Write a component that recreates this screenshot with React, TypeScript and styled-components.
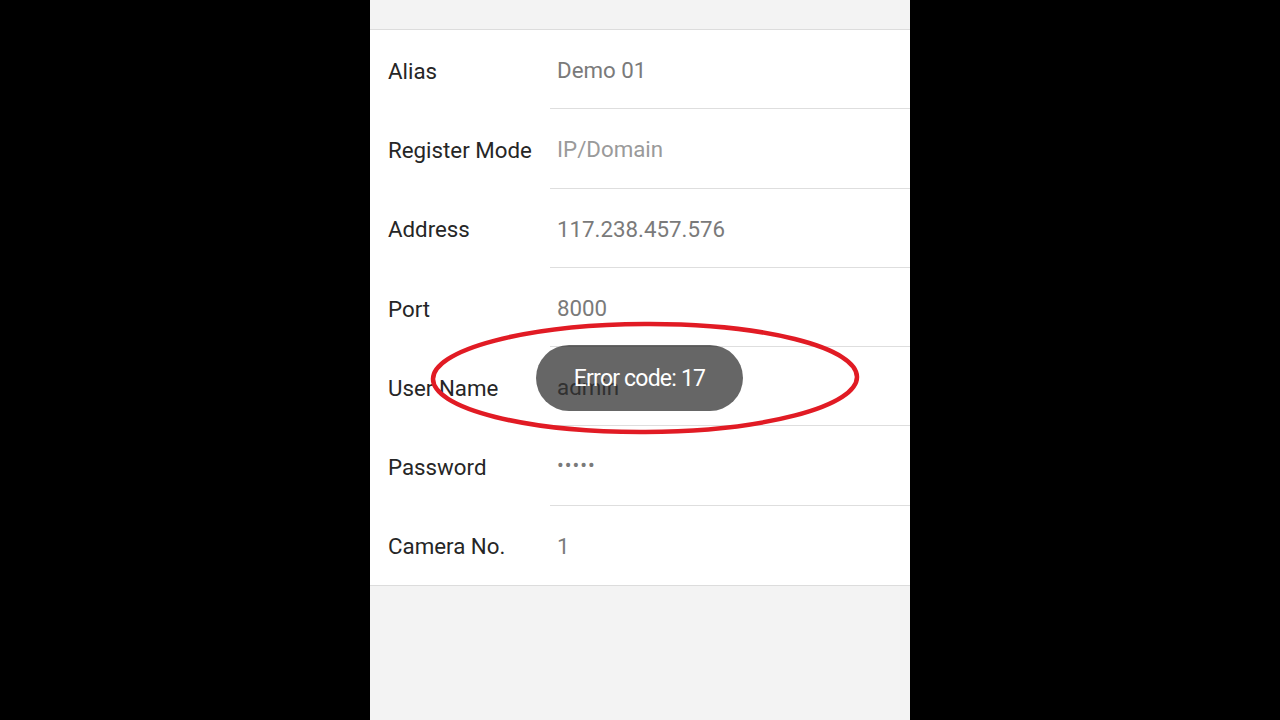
import styled, { createGlobalStyle } from 'styled-components';

const GlobalStyle = createGlobalStyle`
  html, body {
    margin: 0;
    padding: 0;
    background: #000;
    font-family: Roboto, "Liberation Sans", sans-serif;
  }
`;

const Stage = styled.div`
  width: 1280px;
  height: 720px;
  display: flex;
  justify-content: center;
  background: #000;
  overflow: hidden;
`;

const Phone = styled.div`
  width: 540px;
  height: 720px;
  background: #f3f3f3;
  position: relative;
  display: flex;
  flex-direction: column;
`;

const TopBand = styled.div`
  height: 29px;
  border-bottom: 1px solid #dcdcdc;
`;

const Form = styled.div`
  background: #fff;
  display: flex;
  flex-direction: column;
  border-bottom: 1px solid #dcdcdc;
`;

const Row = styled.div`
  height: 79.3px;
  display: flex;
  align-items: stretch;
  box-sizing: border-box;
`;

const Label = styled.div`
  width: 162px;
  padding-left: 18px;
  padding-top: 2px;
  display: flex;
  align-items: center;
  font-size: 22.3px;
  color: #262626;
`;

const Field = styled.div<{ last?: boolean }>`
  flex: 1;
  display: flex;
  align-items: center;
  padding-left: 7px;
  padding-top: 2px;
  border-bottom: ${({ last }) => (last ? 'none' : '1px solid #dedede')};
`;

const Value = styled.span<{ muted?: boolean }>`
  font-size: 22.3px;
  color: ${({ muted }) => (muted ? '#9a9a9a' : '#7a7a7a')};
`;

const Dots = styled.span`
  font-size: 20px;
  letter-spacing: 1px;
  color: #7a7a7a;
  margin-top: -4px;
`;

const Toast = styled.div`
  position: absolute;
  left: 166px;
  top: 345px;
  width: 207px;
  height: 66px;
  border-radius: 33px;
  background: rgba(0, 0, 0, 0.6);
  color: #fff;
  display: flex;
  align-items: center;
  justify-content: center;
  font-size: 23px;
  letter-spacing: -0.8px;
`;

const Circle = styled.svg`
  position: absolute;
  left: 50px;
  top: 310px;
  pointer-events: none;
`;

const rows = [
  { label: 'Alias', value: 'Demo 01' },
  { label: 'Register Mode', value: 'IP/Domain', muted: true },
  { label: 'Address', value: '117.238.457.576' },
  { label: 'Port', value: '8000' },
  { label: 'User Name', value: 'admin' },
  { label: 'Password', value: '•••••', dots: true },
  { label: 'Camera No.', value: '1' },
];

export default function App() {
  return (
    <Stage>
      <GlobalStyle />
      <Phone>
        <TopBand />
        <Form>
          {rows.map((r, i) => (
            <Row key={r.label}>
              <Label>{r.label}</Label>
              <Field last={i === rows.length - 1}>
                {r.dots ? <Dots>{r.value}</Dots> : <Value muted={r.muted}>{r.value}</Value>}
              </Field>
            </Row>
          ))}
        </Form>
        <Toast>Error code: 17</Toast>
        <Circle width="450" height="140" viewBox="0 0 450 140">
          <ellipse
            cx="225"
            cy="68"
            rx="212"
            ry="54"
            fill="none"
            stroke="#e11b24"
            strokeWidth="4.5"
            transform="rotate(-0.3 225 68)"
          />
        </Circle>
      </Phone>
    </Stage>
  );
}
